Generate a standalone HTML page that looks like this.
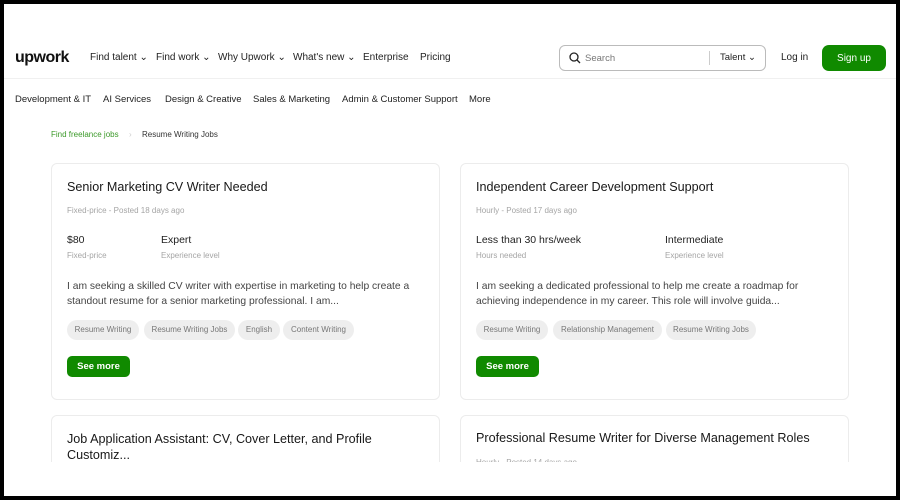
<!DOCTYPE html>
<html><head><meta charset="utf-8"><style>
*{margin:0;padding:0;box-sizing:border-box}
body{width:900px;height:500px;background:#000;position:relative;overflow:hidden;font-family:"Liberation Sans",sans-serif;color:#181818}
#pg{position:absolute;left:4px;top:4px;width:892px;height:492px;background:#fff;overflow:hidden}
.a{position:absolute;white-space:nowrap}
.nav{font-size:10px;color:#222;top:48px}
.cat{font-size:9.5px;color:#222;top:90px}
.card{position:absolute;border:1px solid #ececec;border-radius:6px;background:#fff}
.t{font-size:12.6px;color:#181818}
.s{font-size:8px;color:#a5a5a5}
.v{font-size:10.5px;color:#222}
.d{font-size:10.3px;color:#444;line-height:15px;white-space:normal}
.tag{position:absolute;height:20px;border-radius:10px;background:#eeeeee;font-size:8px;color:#777;line-height:20px;text-align:center}
.btn{position:absolute;width:63px;height:21px;background:#108a00;border-radius:5px;color:#fff;font-size:9.5px;line-height:21px;text-align:center;font-weight:bold}
#clip{position:absolute;left:0;top:458px;width:892px;height:40px;background:#fff}
</style></head><body><div id="pg">
<div class="a" style="left:11px;top:45px;font-size:16px;font-weight:bold;letter-spacing:-0.5px;color:#111">upwork</div>
<div class="a nav" style="left:86px">Find talent ⌄</div>
<div class="a nav" style="left:152px">Find work ⌄</div>
<div class="a nav" style="left:214px">Why Upwork ⌄</div>
<div class="a nav" style="left:289px">What's new ⌄</div>
<div class="a nav" style="left:359px">Enterprise</div>
<div class="a nav" style="left:416px">Pricing</div>
<div class="a" style="left:555px;top:41px;width:207px;height:26px;border:1px solid #bbb;border-radius:6px"></div>
<svg class="a" style="left:565px;top:48px" width="12" height="12" viewBox="0 0 12 12"><circle cx="5" cy="5" r="4" fill="none" stroke="#222" stroke-width="1.3"/><line x1="8" y1="8" x2="11" y2="11" stroke="#222" stroke-width="1.3"/></svg>
<div class="a" style="left:581px;top:49px;font-size:9.5px;color:#777">Search</div>
<div class="a" style="left:705px;top:47px;width:1px;height:14px;background:#ccc"></div>
<div class="a" style="left:716px;top:48px;font-size:9.5px;color:#222">Talent ⌄</div>
<div class="a" style="left:777px;top:48px;font-size:10px;color:#222">Log in</div>
<div class="a" style="left:818px;top:41px;width:64px;height:26px;background:#108a00;border-radius:7px;color:#fff;font-size:10px;text-align:center;line-height:28px">Sign up</div>
<div class="a" style="left:0;top:74px;width:892px;height:1px;background:#f0f0f0"></div>
<div class="a cat" style="left:11px">Development &amp; IT</div>
<div class="a cat" style="left:99px">AI Services</div>
<div class="a cat" style="left:161px">Design &amp; Creative</div>
<div class="a cat" style="left:249px">Sales &amp; Marketing</div>
<div class="a cat" style="left:338px">Admin &amp; Customer Support</div>
<div class="a cat" style="left:465px">More</div>
<div class="a" style="left:47px;top:126px;font-size:8px;color:#3c9a2a">Find freelance jobs</div>
<div class="a" style="left:125px;top:126px;font-size:8px;color:#ccc">›</div>
<div class="a" style="left:138px;top:126px;font-size:8px;color:#333">Resume Writing Jobs</div>

<div class="card" style="left:47px;top:159px;width:389px;height:237px"></div>
<div class="a t" style="left:63px;top:176px">Senior Marketing CV Writer Needed</div>
<div class="a s" style="left:63px;top:202px">Fixed-price - Posted 18 days ago</div>
<div class="a v" style="left:63px;top:230px">$80</div>
<div class="a v" style="left:157px;top:230px">Expert</div>
<div class="a s" style="left:63px;top:247px">Fixed-price</div>
<div class="a s" style="left:157px;top:247px">Experience level</div>
<div class="a d" style="left:63px;top:275px;width:360px">I am seeking a skilled CV writer with expertise in marketing to help create a standout resume for a senior marketing professional. I am...</div>
<div class="tag" style="left:63px;top:316px;width:72px">Resume Writing</div>
<div class="tag" style="left:140px;top:316px;width:91px">Resume Writing Jobs</div>
<div class="tag" style="left:234px;top:316px;width:42px">English</div>
<div class="tag" style="left:279px;top:316px;width:71px">Content Writing</div>
<div class="btn" style="left:63px;top:352px">See more</div>

<div class="card" style="left:456px;top:159px;width:389px;height:237px"></div>
<div class="a t" style="left:472px;top:176px">Independent Career Development Support</div>
<div class="a s" style="left:472px;top:202px">Hourly - Posted 17 days ago</div>
<div class="a v" style="left:472px;top:230px">Less than 30 hrs/week</div>
<div class="a v" style="left:661px;top:230px">Intermediate</div>
<div class="a s" style="left:472px;top:247px">Hours needed</div>
<div class="a s" style="left:661px;top:247px">Experience level</div>
<div class="a d" style="left:472px;top:275px;width:345px">I am seeking a dedicated professional to help me create a roadmap for achieving independence in my career. This role will involve guida...</div>
<div class="tag" style="left:472px;top:316px;width:72px">Resume Writing</div>
<div class="tag" style="left:549px;top:316px;width:109px">Relationship Management</div>
<div class="tag" style="left:662px;top:316px;width:90px">Resume Writing Jobs</div>
<div class="btn" style="left:472px;top:352px">See more</div>

<div class="card" style="left:47px;top:411px;width:389px;height:100px"></div>
<div class="a t" style="left:63px;top:427px;line-height:16px;white-space:normal;width:360px">Job Application Assistant: CV, Cover Letter, and Profile Customiz...</div>
<div class="card" style="left:456px;top:411px;width:389px;height:100px"></div>
<div class="a t" style="left:472px;top:427px">Professional Resume Writer for Diverse Management Roles</div>
<div class="a s" style="left:472px;top:454px">Hourly - Posted 14 days ago</div>
<div id="clip"></div>
</div></body></html>
